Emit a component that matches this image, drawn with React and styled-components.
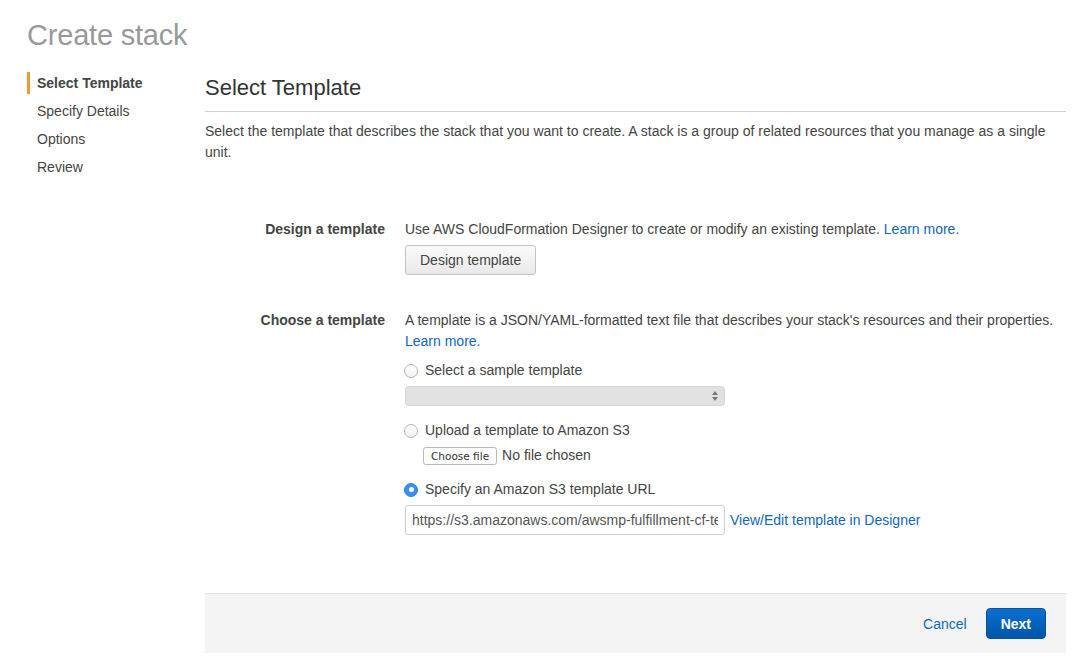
import React from "react";
import styled, { createGlobalStyle, css } from "styled-components";

const Colors = {
  text: "#444",
  muted: "#999",
  link: "#1166bb",
  orange: "#f19a35",
  rule: "#cfcfcf",
};

const GlobalStyle = createGlobalStyle`
  html, body {
    margin: 0;
    padding: 0;
    background: #fff;
    font-family: "Liberation Sans", Arial, Helvetica, sans-serif;
    color: ${Colors.text};
    font-size: 14px;
  }
  * { box-sizing: border-box; }
`;

const Page = styled.div`
    width: 1092px;
    height: 666px;
    padding: 17px 0 0 27px;
    overflow: hidden;
  `,
  Title = styled.h1`
    margin: 0;
    font-size: 29px;
    line-height: 36px;
    font-weight: 400;
    color: ${Colors.muted};
    letter-spacing: -0.2px;
  `,
  Columns = styled.div`
    display: flex;
    margin-top: 19px;
  `,
  Sidebar = styled.ul`
    list-style: none;
    margin: 0;
    padding: 0;
    width: 178px;
    flex-shrink: 0;
  `,
  Step = styled.li`
    height: 22px;
    line-height: 22px;
    margin-bottom: 6px;
    padding-left: 7px;
    font-size: 14px;
    color: ${Colors.text};
    border-left: 3px solid transparent;
    ${(p) =>
      p.$active &&
      css`
        font-weight: 700;
        border-left-color: ${Colors.orange};
      `}
  `,
  Main = styled.div`
    width: 861px;
    display: flex;
    flex-direction: column;
  `,
  Heading = styled.h2`
    margin: 2px 0 0;
    font-size: 22px;
    font-weight: 400;
    line-height: 28px;
    padding-bottom: 9px;
    border-bottom: 1px solid ${Colors.rule};
    color: #333;
  `,
  Description = styled.p`
    margin: 9px 0 0;
    line-height: 21px;
    font-size: 14px;
    padding-right: 8px;
  `,
  Form = styled.div`
    display: grid;
    grid-template-columns: 180px 1fr;
    column-gap: 20px;
    row-gap: 35px;
    margin-top: 56px;
  `,
  Label = styled.div`
    text-align: right;
    font-weight: 700;
    font-size: 14px;
    line-height: 21px;
  `,
  Field = styled.div`
    display: flex;
    flex-direction: column;
    align-items: flex-start;
    line-height: 21px;
  `,
  Link = styled.a`
    color: ${Colors.link};
    text-decoration: none;
    cursor: pointer;
  `,
  GrayButton = styled.button`
    margin-top: 5px;
    height: 30px;
    padding: 0 14px;
    font-family: inherit;
    font-size: 14px;
    color: ${Colors.text};
    background: linear-gradient(#fafafa, #e9e9e9);
    border: 1px solid #c3c3c3;
    border-radius: 3px;
  `,
  RadioRow = styled.label`
    display: flex;
    align-items: center;
    gap: 7px;
    margin-top: ${(p) => p.$top || 0}px;
    margin-left: -1px;
    line-height: 21px;
  `,
  RadioDot = styled.span`
    width: 14px;
    height: 14px;
    border-radius: 50%;
    flex-shrink: 0;
    position: relative;
    border: 1px solid #b5b5b5;
    background: linear-gradient(#fff, #f1f1f1);
    ${(p) =>
      p.$checked &&
      css`
        border-color: #2f7fe6;
        background: #3a8ff2;
        &::after {
          content: "";
          position: absolute;
          width: 5px;
          height: 5px;
          border-radius: 50%;
          background: #fff;
          left: 3.5px;
          top: 3.5px;
        }
      `}
  `,
  SelectBox = styled.div`
    margin-top: 5px;
    width: 320px;
    height: 20px;
    border: 1px solid #d4d4d4;
    border-radius: 4px;
    background: #e1e1e1;
    display: flex;
    justify-content: flex-end;
    align-items: center;
    padding-right: 5px;
  `,
  FileRow = styled.div`
    display: flex;
    align-items: center;
    gap: 5px;
    margin: 4px 0 0 18px;
  `,
  FileButton = styled.button`
    height: 18px;
    padding: 0 7px;
    font-family: "DejaVu Sans", sans-serif;
    font-size: 10.5px;
    color: #333;
    background: #fff;
    border: 1px solid #b9b9b9;
    border-radius: 3px;
    line-height: 16px;
  `,
  UrlRow = styled.div`
    display: flex;
    align-items: center;
    gap: 5px;
    margin-top: 5px;
  `,
  UrlInput = styled.input`
    width: 320px;
    height: 30px;
    padding: 0 6px;
    border: 1px solid #cfcfcf;
    border-radius: 3px;
    font-family: inherit;
    font-size: 14px;
    color: #555;
    outline: none;
  `,
  Footer = styled.div`
    margin-top: 58px;
    height: 60px;
    background: #f4f4f4;
    border-top: 1px solid #e3e3e3;
    display: flex;
    align-items: center;
    justify-content: flex-end;
    gap: 19px;
    padding-right: 20px;
  `,
  PrimaryButton = styled.button`
    height: 31px;
    padding: 0 14px;
    font-family: inherit;
    font-size: 14px;
    font-weight: 700;
    color: #fff;
    background: linear-gradient(#0b70cf, #0055a8);
    border: 1px solid #04539f;
    border-radius: 4px;
  `;

const steps = ["Select Template", "Specify Details", "Options", "Review"];

const Arrows = () => (
  <svg width="8" height="12" viewBox="0 0 8 12">
    <path d="M4 1 L7 5 H1 Z" fill="#777" />
    <path d="M4 11 L7 7 H1 Z" fill="#777" />
  </svg>
);

export default function App() {
  return (
    <Page>
      <GlobalStyle />
      <Title>Create stack</Title>
      <Columns>
        <Sidebar>
          {steps.map((s, i) => (
            <Step key={s} $active={i === 0}>
              {s}
            </Step>
          ))}
        </Sidebar>
        <Main>
          <Heading>Select Template</Heading>
          <Description>
            Select the template that describes the stack that you want to create. A stack is a
            group of related resources that you manage as a single unit.
          </Description>
          <Form>
            <Label>Design a template</Label>
            <Field>
              <span>
                Use AWS CloudFormation Designer to create or modify an existing template.{" "}
                <Link>Learn more.</Link>
              </span>
              <GrayButton>Design template</GrayButton>
            </Field>

            <Label>Choose a template</Label>
            <Field>
              <span>
                A template is a JSON/YAML-formatted text file that describes your stack's
                resources and their properties.
                <br />
                <Link>Learn more.</Link>
              </span>
              <RadioRow $top={8}>
                <RadioDot />
                Select a sample template
              </RadioRow>
              <SelectBox>
                <Arrows />
              </SelectBox>
              <RadioRow $top={14}>
                <RadioDot />
                Upload a template to Amazon S3
              </RadioRow>
              <FileRow>
                <FileButton>Choose file</FileButton>
                No file chosen
              </FileRow>
              <RadioRow $top={13}>
                <RadioDot $checked />
                Specify an Amazon S3 template URL
              </RadioRow>
              <UrlRow>
                <UrlInput readOnly value="https://s3.amazonaws.com/awsmp-fulfillment-cf-templates-prod/" />
                <Link>View/Edit template in Designer</Link>
              </UrlRow>
            </Field>
          </Form>
          <Footer>
            <Link>Cancel</Link>
            <PrimaryButton>Next</PrimaryButton>
          </Footer>
        </Main>
      </Columns>
    </Page>
  );
}
